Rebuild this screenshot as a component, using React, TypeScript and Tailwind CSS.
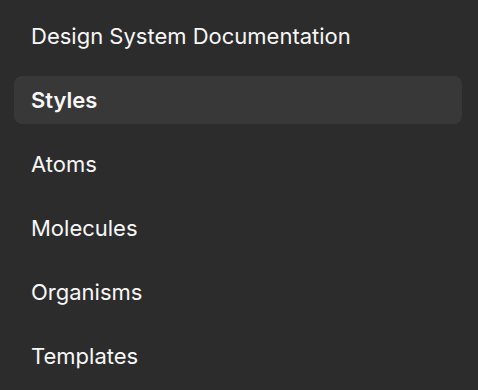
const items = ["Design System Documentation", "Styles", "Atoms", "Molecules", "Organisms", "Templates"];

export default function App() {
  const active = "Styles";

  return (
    <div className="min-h-screen w-full bg-[#2c2c2c] pt-3 pl-[14px] pr-4 font-['Inter',sans-serif]">
      <nav className="flex flex-col gap-4">
        {items.map((item) => (
          <a
            key={item}
            href="#"
            className={`flex h-12 items-center rounded-lg px-[17px] text-[22px] text-[#f7f7f7] ${
              item === active ? "bg-[#383838] font-semibold" : "font-normal"
            }`}
          >
            {item}
          </a>
        ))}
      </nav>
    </div>
  );
}
